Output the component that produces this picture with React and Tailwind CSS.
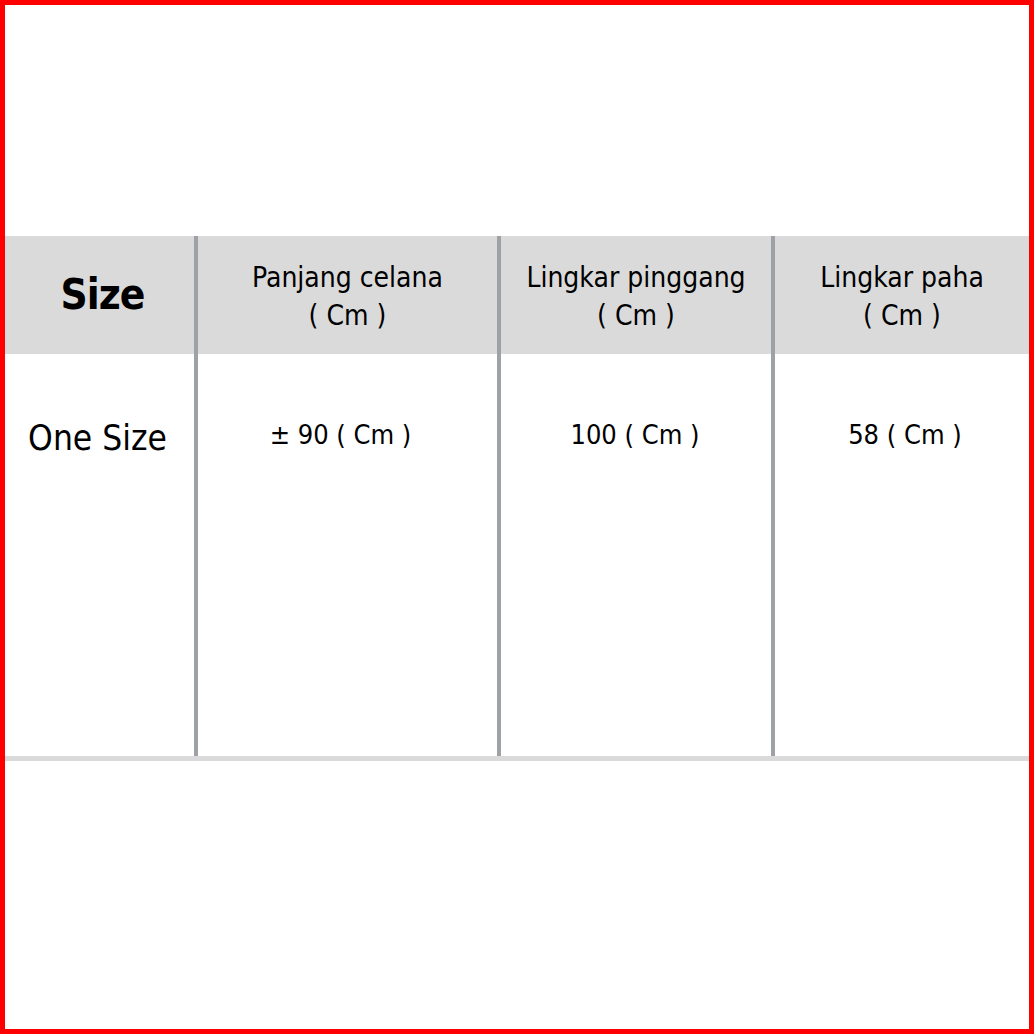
const font = { fontFamily: '"DejaVu Sans Condensed", "DejaVu Sans", sans-serif' };

const columns = [
  { title: ['Panjang celana', '( Cm )'], value: '± 90 ( Cm )', shift: 'pr-[14px]' },
  { title: ['Lingkar pinggang', '( Cm )'], value: '100 ( Cm )', shift: 'pr-[2px]' },
  { title: ['Lingkar paha', '( Cm )'], value: '58 ( Cm )', shift: 'pl-[6px]' },
];

const App = () => {
  return (
    <div className="w-[1034px] h-[1034px] border-[5px] border-[#ff0000] bg-white text-black" style={font}>
      <div className="pt-[231px]">
        <div className="grid grid-cols-[189px_303px_274px_258px]">
          {/* Size column */}
          <div className="flex flex-col">
            <div className="h-[118px] bg-[#dadada] flex items-center justify-center">
              <span className="text-[42px] font-bold leading-none tracking-[-1px] pl-[6px]">Size</span>
            </div>
            <div className="h-[402px] pt-[67px] pr-[4px] text-center text-[35px] leading-[35px]">One Size</div>
          </div>

          {columns.map((col) => (
            <div key={col.value} className="flex flex-col border-l-4 border-[#9ea2a6]">
              <div className="h-[118px] pt-[4px] bg-[#dadada] flex flex-col items-center justify-center text-[28px] leading-[38px]">
                <span>{col.title[0]}</span>
                <span>{col.title[1]}</span>
              </div>
              <div className={`h-[402px] pt-[67px] text-center text-[27px] leading-[27px] ${col.shift}`}>{col.value}</div>
            </div>
          ))}
        </div>
        <div className="h-[5px] bg-[#dadada]" />
      </div>
    </div>
  );
};

export default App;
